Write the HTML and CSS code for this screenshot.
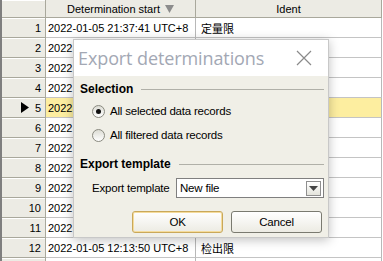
FILE: index.html
```html
<!DOCTYPE html>
<html>
<head>
<meta charset="utf-8">
<link rel="stylesheet" href="styles.css">
</head>
<body>
<div class="grid">
  <div class="row head">
    <div class="rh"></div>
    <div class="c1 hc">Determination start <svg class="sort" width="9" height="8" viewBox="0 0 9 8"><path d="M0 0 H9 L4.5 8 Z" fill="#8c8c8c"/></svg></div>
    <div class="c2 hc">Ident</div>
  </div>
  <div class="row"><div class="rh">1</div><div class="c1">2022-01-05 21:37:41 UTC+8</div><div class="c2">定量限</div></div>
  <div class="row"><div class="rh">2</div><div class="c1">2022</div><div class="c2"></div></div>
  <div class="row"><div class="rh">3</div><div class="c1">2022</div><div class="c2"></div></div>
  <div class="row"><div class="rh">4</div><div class="c1">2022</div><div class="c2"></div></div>
  <div class="row sel"><div class="rh"><svg class="cur" width="8" height="11" viewBox="0 0 8 11"><path d="M0 0 L8 5.5 L0 11 Z" fill="#000"/></svg>5</div><div class="c1">2022</div><div class="c2"></div></div>
  <div class="row"><div class="rh">6</div><div class="c1">2022</div><div class="c2"></div></div>
  <div class="row"><div class="rh">7</div><div class="c1">2022</div><div class="c2"></div></div>
  <div class="row"><div class="rh">8</div><div class="c1">2022</div><div class="c2"></div></div>
  <div class="row"><div class="rh">9</div><div class="c1">2022</div><div class="c2"></div></div>
  <div class="row"><div class="rh">10</div><div class="c1">2022</div><div class="c2"></div></div>
  <div class="row"><div class="rh">11</div><div class="c1">2022</div><div class="c2"></div></div>
  <div class="row"><div class="rh">12</div><div class="c1">2022-01-05 12:13:50 UTC+8</div><div class="c2">检出限</div></div>
  <div class="row"><div class="rh"></div><div class="c1"></div><div class="c2"></div></div>
</div>

<div class="dialog">
  <div class="title">
    <span class="ttext">Export determinations</span>
    <svg class="close" width="16" height="16" viewBox="0 0 16 16"><path d="M1 1 L15 15 M15 1 L1 15" stroke="#8a8a8a" stroke-width="1.2" fill="none"/></svg>
  </div>
  <div class="body">
    <div class="group"><span class="glabel">Selection</span><span class="gline"></span></div>
    <div class="radio"><span class="rb on"></span>All selected data records</div>
    <div class="radio"><span class="rb"></span>All filtered data records</div>
    <div class="group g2"><span class="glabel">Export template</span><span class="gline"></span></div>
    <div class="field">
      <span class="flabel">Export template</span>
      <div class="combo"><span class="ctext">New file</span><span class="cbtn"><svg width="9" height="5" viewBox="0 0 9 5"><path d="M0 0 H9 L4.5 5 Z" fill="#444"/></svg></span></div>
    </div>
    <div class="buttons">
      <div class="btn ok">OK</div>
      <div class="btn">Cancel</div>
    </div>
  </div>
</div>
</body>
</html>
```

FILE: styles.css
```css
html, body {
  margin: 0;
  padding: 0;
  background: #ffffff;
  font-family: "Liberation Sans", Arial, "Noto Sans CJK SC", sans-serif;
  font-size: 11px;
  color: #000;
}
body {
  width: 383px;
  height: 261px;
  overflow: hidden;
  position: relative;
}
.grid {
  width: 383px;
  height: 261px;
  overflow: hidden;
  border-left: 2px solid #7f7f7f;
  box-sizing: border-box;
}
.row {
  display: flex;
  height: 20px;
}
.row.head {
  height: 18px;
}
.rh {
  width: 44px;
  flex: none;
  background: #ecebe4;
  border-right: 1px solid #a9a89c;
  border-bottom: 1px solid #a9a89c;
  box-shadow: inset 0 1px 0 #ffffff;
  display: flex;
  align-items: center;
  justify-content: flex-end;
  padding-right: 4px;
  box-sizing: border-box;
  font-size: 11px;
  position: relative;
}
.cur {
  position: absolute;
  left: 19px;
  top: 4px;
  display: block;
}
.c1, .c2 {
  flex: none;
  border-right: 1px solid #b8b8b8;
  border-bottom: 1px solid #c4c4c4;
  box-sizing: border-box;
  display: flex;
  align-items: center;
  padding-left: 2px;
  white-space: nowrap;
  overflow: hidden;
}
.c1 { width: 150px; }
.c2 { width: 186px; padding-left: 5px; }
.head .c1, .head .c2 {
  background: #ecebe4;
  justify-content: center;
  border-bottom: 1px solid #a9a89c;
  border-right: 1px solid #a9a89c;
  padding-left: 0;
}
.sort {
  margin-left: 5px;
  display: block;
}
.sel .c1, .sel .c2 { background: #fdeea0; }

.dialog {
  position: absolute;
  left: 73px;
  top: 39px;
  width: 256px;
  height: 199px;
  box-sizing: border-box;
  border: 1px solid #c8c8c8;
  background: #f0efe7;
  box-shadow: 0 2px 10px rgba(0,0,0,0.25);
  display: flex;
  flex-direction: column;
  overflow: hidden;
}
.title {
  height: 36px;
  background: #ffffff;
  display: flex;
  align-items: center;
  justify-content: space-between;
  padding: 0 16px 0 4px;
  flex: none;
}
.ttext {
  font-family: "Open Sans", "Noto Sans", sans-serif;
  font-size: 18px;
  color: #a3a8b4;
  letter-spacing: -0.1px;
}
.close { display: block; }
.body {
  padding: 5px 4px 0 6px;
  display: flex;
  flex-direction: column;
  font-size: 11.5px;
  letter-spacing: -0.2px;
}
.group {
  display: flex;
  align-items: center;
  height: 16px;
}
.glabel {
  font-weight: bold;
  font-size: 12px;
  letter-spacing: 0;
  margin-right: 8px;
}
.gline {
  flex: 1;
  height: 1px;
  background: #b0b0a8;
}
.g2 { margin-top: 13px; }
.radio {
  display: flex;
  align-items: center;
  height: 16px;
  margin-left: 12px;
  margin-top: 6px;
}
.radio + .radio { margin-top: 8px; }
.rb {
  width: 11px;
  height: 11px;
  border: 1px solid #8a8a80;
  border-radius: 50%;
  background: linear-gradient(#dcdcd4, #ffffff);
  margin-right: 5px;
  position: relative;
  flex: none;
}
.rb.on::after {
  content: "";
  position: absolute;
  left: 3px;
  top: 3px;
  width: 5px;
  height: 5px;
  border-radius: 50%;
  background: #111;
}
.field {
  display: flex;
  align-items: center;
  margin-top: 6px;
  margin-left: 12px;
}
.flabel { width: 84px; flex: none; white-space: nowrap; }
.combo {
  width: 148px;
  height: 20px;
  border: 1px solid #7f7f7f;
  box-sizing: border-box;
  background: #fff;
  display: flex;
  align-items: center;
  justify-content: space-between;
  padding-left: 3px;
  padding-right: 2px;
}
.cbtn {
  width: 15px;
  height: 15px;
  border: 1px solid #8f8f8f;
  box-sizing: border-box;
  background: linear-gradient(#ffffff, #e4e4dc);
  display: flex;
  align-items: center;
  justify-content: center;
}
.cbtn svg { display: block; }
.buttons {
  display: flex;
  justify-content: flex-end;
  gap: 8px;
  margin-top: 13px;
  padding-right: 2px;
}
.btn {
  width: 91px;
  height: 22px;
  box-sizing: border-box;
  border: 1px solid #7a7a70;
  border-radius: 3px;
  background: linear-gradient(#ffffff, #ecebe3);
  display: flex;
  align-items: center;
  justify-content: center;
}
.btn.ok {
  border-color: #c9a85a;
  box-shadow: inset 0 0 0 1px #f5dc9c;
}
```
